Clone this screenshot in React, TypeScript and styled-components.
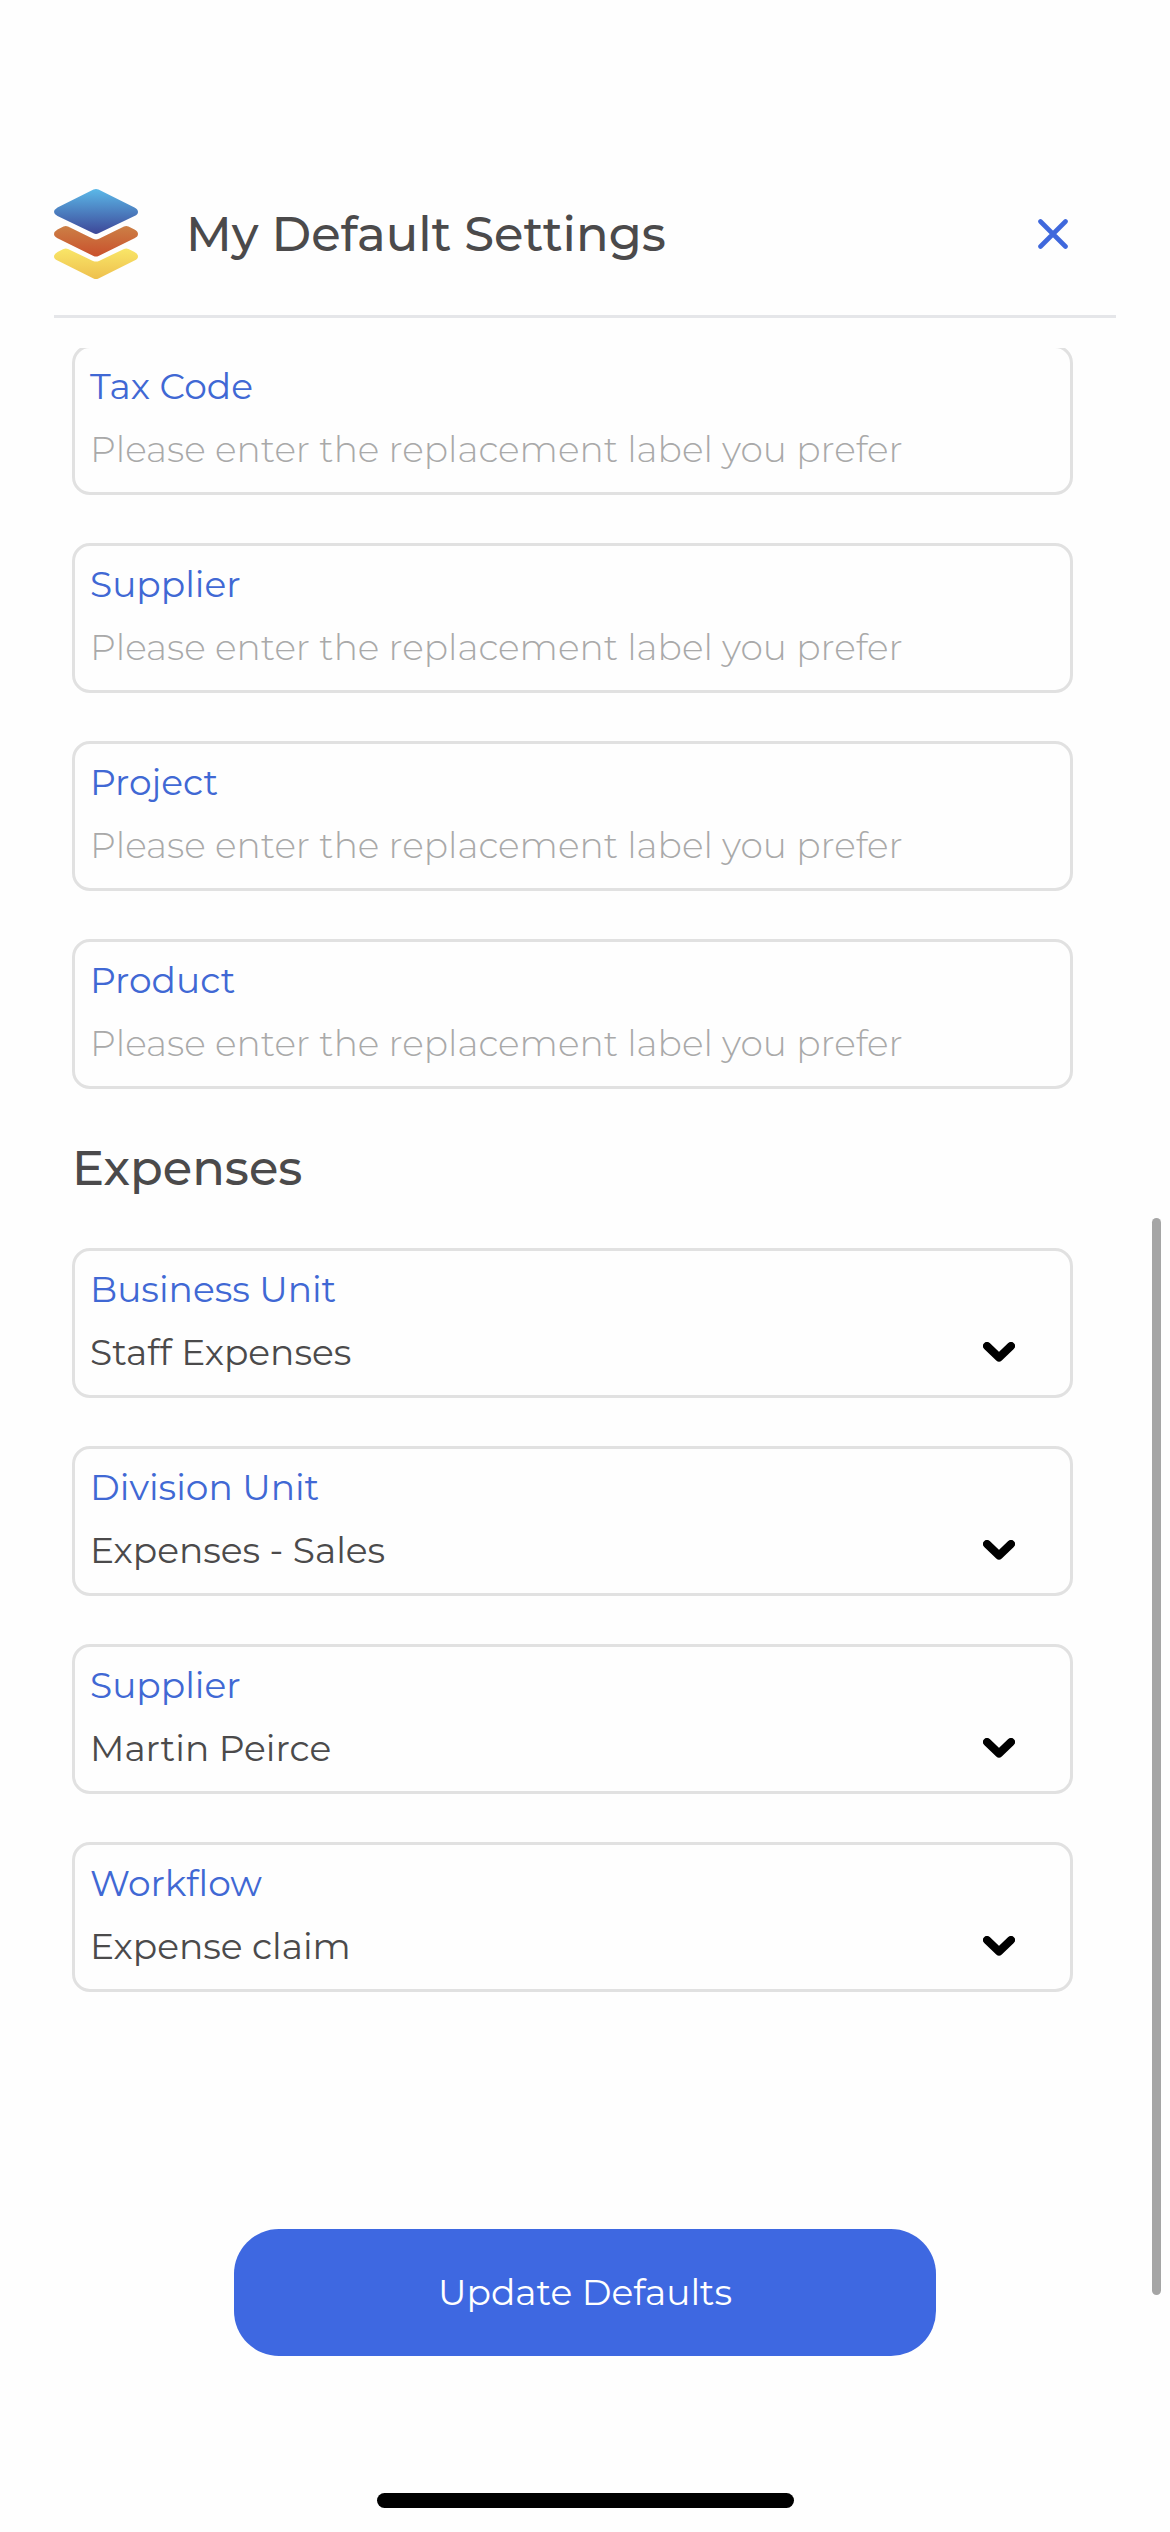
import React, { useId } from "react";
import styled, { createGlobalStyle } from "styled-components";

const GlobalStyle = createGlobalStyle`
  *, *::before, *::after { box-sizing: border-box; }
  body {
    margin: 0;
    background: #fefefe;
    color: #4b4a4b;
    font-family: Montserrat, Inter, "Liberation Sans", sans-serif;
    font-size: 36px;
    line-height: 48px;
  }
`;

const Screen = styled.div`
  position: relative;
  display: flex;
  flex-direction: column;
  min-height: 100vh;
`;

const Header = styled.header`
  display: flex;
  align-items: center;
  gap: 48px;
  margin: 153px 54px 0;
  padding: 36px 48px 36px 0;
  border-bottom: 3px solid #e5e6e9;
`;

const Logo = styled.svg`
  flex: none;
  width: 84px;
  height: 90px;
`;

const Title = styled.h1`
  flex: 1;
  margin: 0;
  font-size: 48px;
  line-height: 60px;
  font-weight: 500;
`;

const CloseButton = styled.button`
  display: flex;
  padding: 0;
  border: 0;
  background: none;
  color: #3f68dc;
  cursor: pointer;
`;

const Content = styled.main`
  flex: 1;
  overflow: hidden;
  margin-top: 30px;
  padding: 0 97px 0 72px;
`;

const Fields = styled.div<{ $scrolled?: boolean }>`
  display: flex;
  flex-direction: column;
  gap: 48px;
  margin-top: ${(p) => (p.$scrolled ? "-3px" : "0")};
`;

const SectionTitle = styled.h2`
  margin: 49px 0 50px;
  font-size: 48px;
  line-height: 60px;
  font-weight: 500;
`;

const Card = styled.div`
  display: flex;
  flex-direction: column;
  gap: 15px;
  padding: 14px 15px 19px;
  border: 3px solid #e1e1e1;
  border-radius: 18px;
`;

const Label = styled.label`
  color: #4068d4;
`;

const TextInput = styled.input`
  width: 100%;
  height: 48px;
  padding: 0;
  border: 0;
  outline: 0;
  background: none;
  color: inherit;
  font: inherit;

  &::placeholder {
    color: #a9a9a9;
    font-weight: 300;
    opacity: 1;
  }
`;

const SelectRow = styled.div`
  display: grid;
  align-items: center;

  > * {
    grid-area: 1 / 1;
  }
`;

const Select = styled.select`
  width: 100%;
  height: 48px;
  padding: 0;
  border: 0;
  outline: 0;
  appearance: none;
  background: none;
  color: inherit;
  font: inherit;
`;

const Chevron = styled.svg`
  justify-self: end;
  width: 32px;
  height: 20px;
  margin-right: 40px;
  pointer-events: none;
`;

const Footer = styled.footer`
  display: flex;
  flex-direction: column;
  align-items: center;
  gap: 137px;
  padding-bottom: 24px;
`;

const SubmitButton = styled.button`
  width: 60%;
  padding: 39px 24px 40px;
  border: 0;
  border-radius: 45px;
  background: #3e68e1;
  color: #fff;
  font: inherit;
  cursor: pointer;
`;

const HomeIndicator = styled.div`
  width: 417px;
  height: 15px;
  border-radius: 8px;
  background: #000;
`;

const ScrollThumb = styled.div`
  position: absolute;
  top: 1218px;
  right: 9px;
  width: 9px;
  height: 1077px;
  border-radius: 5px;
  background: #a5a5a5;
`;

const labelFields = ["Tax Code", "Supplier", "Project", "Product"];

const expenseFields = [
  { label: "Business Unit", value: "Staff Expenses" },
  { label: "Division Unit", value: "Expenses - Sales" },
  { label: "Supplier", value: "Martin Peirce" },
  { label: "Workflow", value: "Expense claim" },
];

function TextField({ label }: { label: string }) {
  const id = useId();
  return (
    <Card>
      <Label htmlFor={id}>{label}</Label>
      <TextInput id={id} type="text" placeholder="Please enter the replacement label you prefer" />
    </Card>
  );
}

function SelectField({ label, value }: { label: string; value: string }) {
  const id = useId();
  return (
    <Card>
      <Label htmlFor={id}>{label}</Label>
      <SelectRow>
        <Select id={id} defaultValue={value}>
          <option>{value}</option>
        </Select>
        <Chevron viewBox="0 0 32 20" aria-hidden="true">
          <path d="M4 4 16 15.500 28 4" fill="none" stroke="#000" strokeWidth="8" strokeLinecap="round" strokeLinejoin="round" />
        </Chevron>
      </SelectRow>
    </Card>
  );
}

function StackLogo() {
  return (
    <Logo viewBox="0 0 84 90" aria-hidden="true">
      <defs>
        <linearGradient id="blue" x1="0" y1="0" x2="0" y2="1">
          <stop offset="0" stopColor="#5bb8e8" />
          <stop offset="1" stopColor="#3d4798" />
        </linearGradient>
        <linearGradient id="orange" x1="0" y1="0" x2="0" y2="1">
          <stop offset="0" stopColor="#cc8046" />
          <stop offset="1" stopColor="#c9502c" />
        </linearGradient>
        <linearGradient id="yellow" x1="0" y1="0" x2="0" y2="1">
          <stop offset="0" stopColor="#f9e668" />
          <stop offset="1" stopColor="#eec04e" />
        </linearGradient>
      </defs>
      <path fill="url(#blue)" d="M39.500.6Q42-.6 44.500.6L80.500 18.600Q84 20.400 84 23T80.500 27L44.500 44.300Q42 45.600 39.500 44.300L3.500 27Q0 25.200 0 23T3.500 18.600Z" />
      <path fill="url(#orange)" d="M9.500 37.500Q11.800 36.400 14 37.500L39 49.700Q42 51.100 45 49.700L70 37.500Q72.200 36.400 74.500 37.500L80.500 40.500Q84 42.300 84 45T80.500 49.200L44.500 67Q42 68.200 39.500 67L3.500 49.200Q0 47.400 0 45T3.500 40.500Z" />
      <path fill="url(#yellow)" d="M9.500 60Q11.800 58.900 14 60L39 71.900Q42 73.300 45 71.900L70 60Q72.200 58.900 74.500 60L80.500 63Q84 64.800 84 67.400T80.500 71.600L44.500 89.400Q42 90.600 39.500 89.400L3.500 71.600Q0 69.800 0 67.400T3.500 63Z" />
    </Logo>
  );
}

export default function App() {
  return (
    <>
      <GlobalStyle />
      <Screen>
        <Header>
          <StackLogo />
          <Title>My Default Settings</Title>
          <CloseButton type="button" aria-label="Close">
            <svg width="30" height="30" viewBox="0 0 30 30" aria-hidden="true">
              <path d="M2.500 2.500 27.500 27.500M27.500 2.500 2.500 27.500" stroke="currentColor" strokeWidth="4.600" strokeLinecap="round" />
            </svg>
          </CloseButton>
        </Header>
        <Content>
          <Fields $scrolled>
            {labelFields.map((label) => (
              <TextField key={label} label={label} />
            ))}
          </Fields>
          <SectionTitle>Expenses</SectionTitle>
          <Fields>
            {expenseFields.map((field) => (
              <SelectField key={field.label} {...field} />
            ))}
          </Fields>
        </Content>
        <Footer>
          <SubmitButton type="button">Update Defaults</SubmitButton>
          <HomeIndicator />
        </Footer>
        <ScrollThumb />
      </Screen>
    </>
  );
}
